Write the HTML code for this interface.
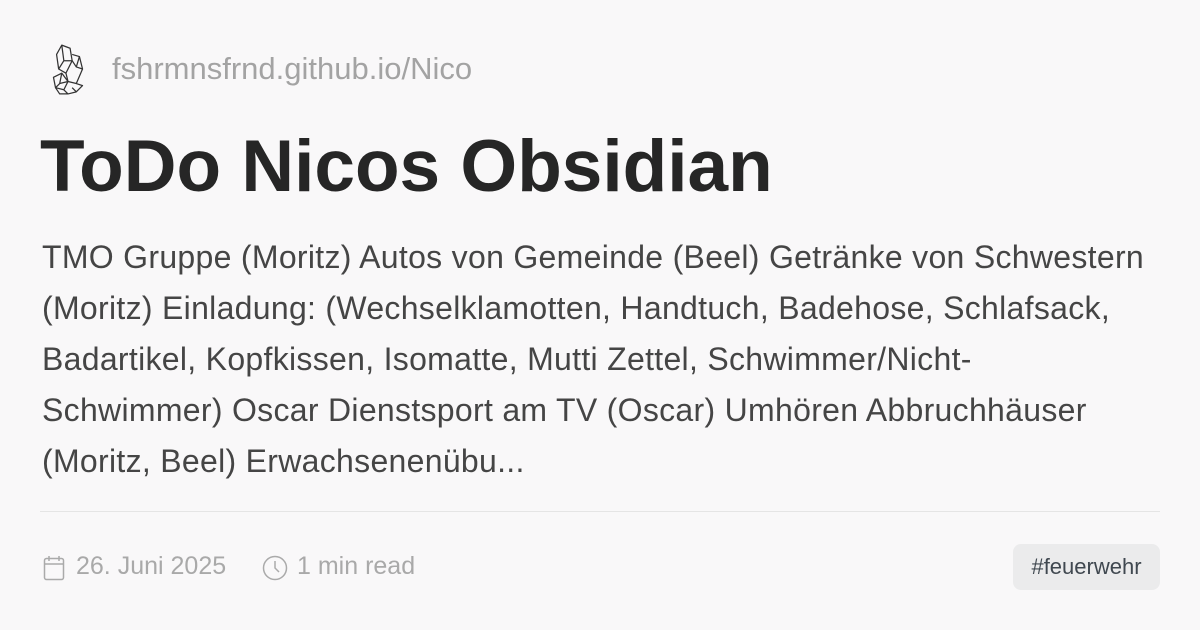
<!DOCTYPE html>
<html><head><meta charset="utf-8"><style>
body{margin:0;width:1200px;height:630px;background:#f9f8f9;font-family:"Liberation Sans",sans-serif;overflow:hidden;position:relative}
.site{position:absolute;left:112px;top:51px;font-size:31px;color:#a3a3a3;letter-spacing:0px}
h1{position:absolute;left:40px;top:122px;margin:0;font-size:73px;line-height:90px;font-weight:bold;color:#262626;letter-spacing:0px}
.body{position:absolute;left:42px;top:232px;font-size:32px;line-height:51px;color:#454545;letter-spacing:0.3px}
.body div{white-space:nowrap}
.hr{position:absolute;left:40px;right:40px;top:511px;height:1px;background:#e5e5e5}
.meta{position:absolute;top:552px;font-size:25px;color:#a9a9a9}
.tag{position:absolute;left:1013px;top:544px;width:147px;height:46px;background:#ebebec;border-radius:8px;font-size:22px;color:#404850;text-align:center;line-height:46px}
</style></head><body>
<svg style="position:absolute;left:46px;top:42px" width="44" height="54" viewBox="0 0 40 52" fill="none" stroke="#333" stroke-width="1.2" stroke-linejoin="round">
<path d="M14 3 L22 6 L24 18 L18 30 L11 26 L9 12 Z"/><path d="M14 3 L16 18 L11 26 M16 18 L24 18"/>
<path d="M24 12 L31 14 L34 26 L28 40 L20 38 L18 30"/><path d="M31 14 L28 24 L34 26 M28 24 L24 18"/>
<path d="M6 34 L14 30 L20 38 L16 46 L8 44 Z"/><path d="M14 30 L12 40 L20 38 M12 40 L8 44"/>
<path d="M8 44 L12 50 L20 50 L28 48 L34 42 L28 40 M16 46 L20 50 M24 44 L28 48"/>
</svg>
<div class="site">fshrmnsfrnd.github.io/Nico</div>
<h1>ToDo Nicos Obsidian</h1>
<div class="body">
<div>TMO Gruppe (Moritz) Autos von Gemeinde (Beel) Getränke von Schwestern</div>
<div>(Moritz) Einladung: (Wechselklamotten, Handtuch, Badehose, Schlafsack,</div>
<div>Badartikel, Kopfkissen, Isomatte, Mutti Zettel, Schwimmer/Nicht-</div>
<div>Schwimmer) Oscar Dienstsport am TV (Oscar) Umhören Abbruchhäuser</div>
<div>(Moritz, Beel) Erwachsenenübu...</div>
</div>
<div class="hr"></div>
<svg style="position:absolute;left:43px;top:555px" width="22" height="26" viewBox="0 0 22 26" fill="none" stroke="#aaa" stroke-width="1.5"><rect x="1.5" y="3.5" width="19" height="21" rx="2"/><path d="M1.5 9h19M6 1v5M16 1v5"/></svg>
<div class="meta" style="left:76px">26. Juni 2025</div>
<svg style="position:absolute;left:262px;top:555px" width="26" height="26" viewBox="0 0 26 26" fill="none" stroke="#aaa" stroke-width="1.5"><circle cx="13" cy="13" r="11.5"/><path d="M13 6v7l4 4"/></svg>
<div class="meta" style="left:297px">1 min read</div>
<div class="tag">#feuerwehr</div>
</body></html>
